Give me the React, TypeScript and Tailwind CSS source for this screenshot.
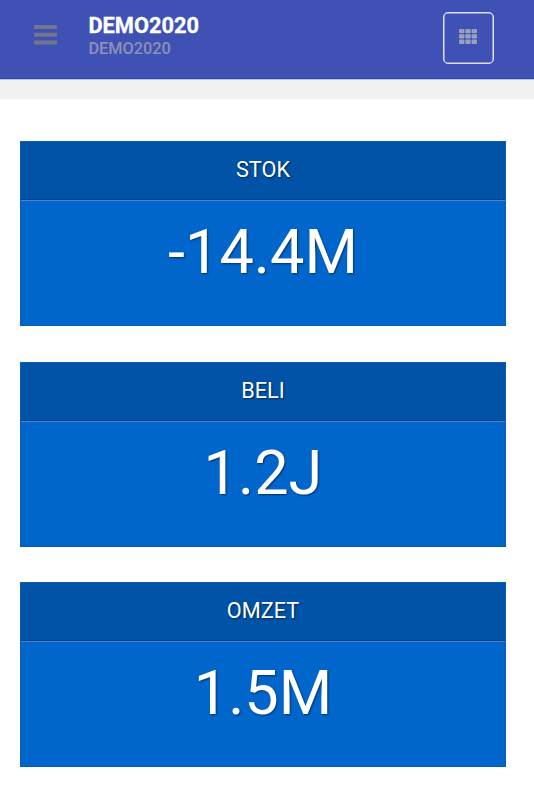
const stats = [
  { label: "STOK", value: "-14.4M" },
  { label: "BELI", value: "1.2J" },
  { label: "OMZET", value: "1.5M" },
];

function MenuIcon() {
  return (
    <svg className="h-5 w-[23px] text-[#74768b]" viewBox="0 0 23 20" fill="currentColor">
      <rect x="0" y="0" width="23" height="4" rx="0.5" />
      <rect x="0" y="7.8" width="23" height="4" rx="0.5" />
      <rect x="0" y="15.6" width="23" height="4" rx="0.5" />
    </svg>
  );
}

function GridIcon() {
  return (
    <svg className="h-[15px] w-[18px] text-[#9b9fbd]" viewBox="0 0 18 15" fill="currentColor">
      {[0, 5.3, 10.6].map((y) =>
        [0, 6.3, 12.6].map((x) => (
          <rect key={`${x}-${y}`} x={x} y={y} width="5.4" height="4.3" rx="1" />
        ))
      )}
    </svg>
  );
}

function Header() {
  return (
    <header className="flex h-[79px] items-start border-b border-[#3345a0] bg-[#3f51b5] pl-[34px] pr-10">
      <button className="mt-[25px]" aria-label="Menu">
        <MenuIcon />
      </button>
      <div className="ml-[31.4px] mt-[13px]">
        <h1 className="text-[21.8px] font-bold leading-[25px] text-white [-webkit-text-stroke:0.3px_white]">
          DEMO2020
        </h1>
        <p className="mt-px text-[16.3px] font-medium leading-5 text-[#8c92b6]">DEMO2020</p>
      </div>
      <button
        className="ml-auto mt-3 flex h-[52px] w-[51px] items-center justify-center rounded-[5px] border border-[#dde1f5] pb-[3px] pr-px shadow-[inset_0_0_0_0.5px_#dde1f5]"
        aria-label="Apps"
      >
        <GridIcon />
      </button>
    </header>
  );
}

export default function App() {
  return (
    <div className="h-[800px] overflow-hidden bg-white font-['Roboto','Liberation_Sans',sans-serif]">
      <Header />
      <div className="h-5 border-t border-[#b4c3f2] bg-[#f0f0f0]" />
      <main className="flex flex-col gap-[35.5px] pl-5 pr-7 pt-[42px]">
        {stats.map((stat) => (
          <section
            key={stat.label}
            className="h-[185px] border border-[#0b5cad] bg-[#0066cc] text-center text-white"
          >
            <h2 className="h-[58px] border-b border-[#003f85] bg-[#0053a6] text-[21.7px] leading-[56px] [text-shadow:1px_1px_2px_rgba(0,0,0,0.5)]">
              {stat.label}
            </h2>
            <div className="h-[125px] border-t border-[#3c88d8] pt-[14px] text-[61.3px] leading-[74px] [text-shadow:1px_1px_2px_rgba(0,0,0,0.5)]">
              {stat.value}
            </div>
          </section>
        ))}
      </main>
    </div>
  );
}
